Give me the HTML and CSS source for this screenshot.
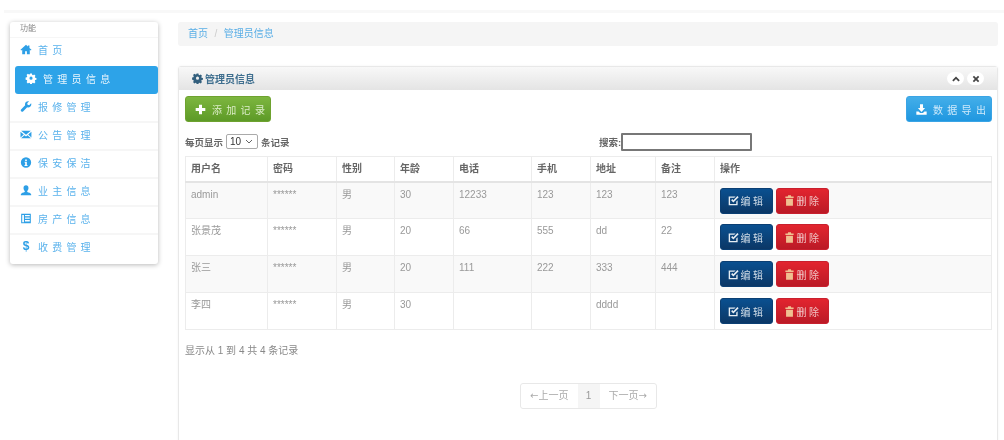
FILE: index.html
```html
<!DOCTYPE html>
<html lang="zh">
<head>
<meta charset="utf-8">
<title>管理员信息</title>
<link rel="stylesheet" href="styles.css">
</head>
<body>
<svg class="defs" width="0" height="0" aria-hidden="true">
  <symbol id="i-home" viewBox="0 0 16 16"><path d="M8 1 0 8.500l1 1.100 1.500-1.300V15h4.200v-4.300h2.600V15h4.200V8.300L15 9.600l1-1.100-3-2.800V2h-2.300v1.500z"/></symbol>
  <symbol id="i-cog" viewBox="0 0 16 16"><path fill-rule="evenodd" d="M6.600 1h2.800l.4 2 1.300.6 1.800-1.100 2 2-1.100 1.800.6 1.300 2 .4v2.800l-2 .4-.6 1.300 1.100 1.800-2 2-1.800-1.100-1.300.6-.4 2H6.600l-.4-2-1.300-.6-1.800 1.100-2-2 1.100-1.800-.6-1.300-2-.4V7l2-.4.6-1.300-1.100-1.800 2-2 1.800 1.100 1.300-.6zM8 5.800a2.400 2.400 0 1 0 0 4.800 2.400 2.400 0 0 0 0-4.800z" transform="translate(.5 -.2) scale(.94)"/></symbol>
  <symbol id="i-wrench" viewBox="0 0 16 16"><path d="M15.400 3.300 12.600 6l-2.300-.5-.5-2.300L12.500.5a4.500 4.500 0 0 0-5.700 5.700L.8 12.200a2 2 0 0 0 0 2.400l.5.500a2 2 0 0 0 2.400 0l6-6a4.500 4.500 0 0 0 5.700-5.800z"/></symbol>
  <symbol id="i-mail" viewBox="0 0 16 16"><path d="M1 2.500h14L8 8.500zM0 4v8.500l4.800-4.500zM15.900 4v8.500L11.200 8zM5.800 9 8 10.900 10.200 9l5 4.500H.8z"/></symbol>
  <symbol id="i-info" viewBox="0 0 16 16"><path fill-rule="evenodd" d="M8 .5a7.500 7.500 0 1 0 0 15 7.500 7.500 0 0 0 0-15zM6.800 3.500h2.400v2.200H6.800zM6 7h3.200v4.500H10.200V13H5.800v-1.500h1V8.500H6z"/></symbol>
  <symbol id="i-user" viewBox="0 0 16 16"><path d="M8 .5c2.300 0 3.600 1.700 3.600 3.900 0 2-.9 3.500-1.800 4.300v1.500c2 .7 5.200 1.500 5.700 3.300v1.500H.5V13.500c.5-1.800 3.700-2.600 5.700-3.300V8.700C5.300 7.900 4.400 6.400 4.400 4.400 4.400 2.200 5.700.5 8 .5z"/></symbol>
  <symbol id="i-list" viewBox="0 0 16 16"><path fill-rule="evenodd" d="M1 1h14v14H1zM2.500 2.800v10.700h2.500V2.800zM6.500 2.800v2h7v-2zM6.500 6.500v2h7v-2zM6.500 10.200v2h7v-2z"/></symbol>
  <symbol id="i-plus" viewBox="0 0 16 16"><path d="M5.800 1h4.400v4.800H15v4.400h-4.800V15H5.800v-4.800H1V5.800h4.800z"/></symbol>
  <symbol id="i-down" viewBox="0 0 16 16"><path d="M5.800.5h4.400v5.300h3L8 11.500 2.800 5.800h3zM.5 11h3.200l2.200 2h4.200l2.200-2h3.200v4.500H.5z"/></symbol>
  <symbol id="i-edit" viewBox="0 0 16 16"><path d="M12 9.500V13H3V4h6l2-2H1v13h13V7.500z"/><path d="M4.500 7.500 7.800 11 15.500 3.200 13.700 1.500 7.800 7.500 6.300 5.800z"/></symbol>
  <symbol id="i-trash" viewBox="0 0 16 16"><path d="M6 .5h4l.5 1.500H14v2.500H2V2h3.500zM3 5.500h10V15.500H3z"/></symbol>
  <symbol id="i-up" viewBox="0 0 16 16"><path d="M8 3 15.500 10.500 13 13 8 8 3 13 .5 10.500z"/></symbol>
  <symbol id="i-x" viewBox="0 0 16 16"><path d="M4 1.500 8 5.500l4-4L14.500 4l-4 4 4 4-2.500 2.500-4-4-4 4L1.500 12l4-4-4-4z"/></symbol>
</svg>
<div class="page">
  <aside class="sidebar">
    <div class="side-title">功能</div>
    <ul class="nav">
      <li class="nav-first"><a><svg class="nav-ico"><use href="#i-home"/></svg>首页</a></li>
      <li class="active"><a><svg class="nav-ico"><use href="#i-cog"/></svg>管理员信息</a></li>
      <li><a><svg class="nav-ico"><use href="#i-wrench"/></svg>报修管理</a></li>
      <li><a><svg class="nav-ico"><use href="#i-mail"/></svg>公告管理</a></li>
      <li><a><svg class="nav-ico"><use href="#i-info"/></svg>保安保洁</a></li>
      <li><a><svg class="nav-ico"><use href="#i-user"/></svg>业主信息</a></li>
      <li><a><svg class="nav-ico"><use href="#i-list"/></svg>房产信息</a></li>
      <li><a><span class="nav-ico dollar">$</span>收费管理</a></li>
    </ul>
  </aside>
  <main class="content">
    <nav class="crumb"><a>首页</a><span class="sep">/</span><a>管理员信息</a></nav>
    <section class="panel">
      <header class="panel-head">
        <h2><svg class="head-ico"><use href="#i-cog"/></svg>管理员信息</h2>
        <div class="head-tools">
          <span class="tool"><svg><use href="#i-up"/></svg></span>
          <span class="tool"><svg><use href="#i-x"/></svg></span>
        </div>
      </header>
      <div class="panel-body">
        <div class="actions">
          <button class="btn btn-green"><svg><use href="#i-plus"/></svg>添加记录</button>
          <button class="btn btn-blue"><svg><use href="#i-down"/></svg>数据导出</button>
        </div>
        <div class="filters">
          <label class="len">每页显示 <select class="len-select"><option>10</option></select> 条记录</label>
          <label class="search">搜索:<input class="search-input" type="text"></label>
        </div>
        <table class="grid">
          <colgroup>
            <col class="c1"><col class="c2"><col class="c3"><col class="c4"><col class="c5"><col class="c6"><col class="c7"><col class="c8"><col>
          </colgroup>
          <thead>
            <tr><th>用户名</th><th>密码</th><th>性别</th><th>年龄</th><th>电话</th><th>手机</th><th>地址</th><th>备注</th><th>操作</th></tr>
          </thead>
          <tbody>
            <tr><td>admin</td><td>******</td><td>男</td><td>30</td><td>12233</td><td>123</td><td>123</td><td>123</td><td class="ops"><button class="mini mini-edit"><svg><use href="#i-edit"/></svg>编辑</button><button class="mini mini-del"><svg><use href="#i-trash"/></svg>删除</button></td></tr>
            <tr><td>张景茂</td><td>******</td><td>男</td><td>20</td><td>66</td><td>555</td><td>dd</td><td>22</td><td class="ops"><button class="mini mini-edit"><svg><use href="#i-edit"/></svg>编辑</button><button class="mini mini-del"><svg><use href="#i-trash"/></svg>删除</button></td></tr>
            <tr><td>张三</td><td>******</td><td>男</td><td>20</td><td>111</td><td>222</td><td>333</td><td>444</td><td class="ops"><button class="mini mini-edit"><svg><use href="#i-edit"/></svg>编辑</button><button class="mini mini-del"><svg><use href="#i-trash"/></svg>删除</button></td></tr>
            <tr><td>李四</td><td>******</td><td>男</td><td>30</td><td></td><td></td><td>dddd</td><td></td><td class="ops"><button class="mini mini-edit"><svg><use href="#i-edit"/></svg>编辑</button><button class="mini mini-del"><svg><use href="#i-trash"/></svg>删除</button></td></tr>
          </tbody>
        </table>
        <p class="info">显示从 1 到 4 共 4 条记录</p>
        <div class="pager-wrap">
          <div class="pager"><a><span class="arrow">←</span>上一页</a><a class="cur">1</a><a>下一页<span class="arrow">→</span></a></div>
        </div>
      </div>
    </section>
  </main>
</div>
</body>
</html>
```
FILE: styles.css
```css
* { box-sizing: border-box; }
html, body { margin: 0; height: 100%; overflow: hidden; background: #fff; }
body { font-family: "Liberation Sans", "Noto Sans CJK SC", sans-serif; font-size: 10px; color: #777; }
.defs { position: absolute; }
svg { fill: currentColor; }
.page { display: flex; align-items: flex-start; gap: 20px; height: 440px; padding: 10px 6px 0 10px; filter: blur(.6px); background: linear-gradient(#f8f8f8, #f8f8f8) no-repeat 4px 10px / 100% 3px; }

.sidebar { width: 148px; margin-top: 12px; flex: none; background: #fff; border-radius: 3px; box-shadow: 0 1px 5px rgba(0,0,0,.28); height: 242px; }
.side-title { height: 15px; padding: 2px 0 0 10px; font-size: 8px; line-height: 10px; color: #888; }
.nav { list-style: none; margin: 0; padding: 0; }
.nav li { height: 28px; border-top: 2px solid #f6f6f6; }
.nav .nav-first { height: 28px; border-top: 1px solid #f6f6f6; padding-bottom: 4px; }
.nav a { display: flex; align-items: center; height: 100%; padding: 0 0 3px 10px; font-size: 10px; letter-spacing: 4.200px; color: #5ab2ec; }
.nav-first a { padding-bottom: 0; }
.nav-ico { width: 12px; height: 11px; margin-right: 6px; flex: none; color: #2d9fe6; }
.dollar { display: block; font-weight: 700; font-size: 12px; line-height: 11px; text-align: center; letter-spacing: 0; }
.nav .active { margin-left: 5px; height: 28px; margin-top: 1px; border: 0; background: #2da3e8; border-radius: 3px; }
.nav .active a { padding-bottom: 3px; padding-left: 10px; color: #e8f5fd; letter-spacing: 4.300px; }
.nav .active .nav-ico { color: #fff; }
.nav .active + li { height: 27px; border-top: 0; }

.content { flex: 1; min-width: 0; margin-top: 12px; }
.crumb { height: 24px; margin-bottom: 20px; padding-left: 10px; background: #f5f5f5; border-radius: 3px; font-size: 10px; line-height: 23px; color: #5aaee6; }
.sep { margin: 0 6.500px; color: #ccc; }

.panel { border: 1px solid #e8e8e8; border-radius: 3px 3px 0 0; height: 380px; box-shadow: 0 0 3px rgba(0,0,0,.05); }
.panel-head { display: flex; justify-content: space-between; align-items: center; height: 23px; padding: 0 13px 0 13px; background: linear-gradient(#f8f8f8, #e4e4e4); }
.panel-head h2 { margin: 0; display: flex; align-items: center; font-size: 10px; font-weight: 700; color: #3f6f8f; }
.head-ico { width: 11px; height: 11px; margin-right: 2px; color: #335f7d; }
.head-tools { display: flex; gap: 3px; }
.tool { display: flex; align-items: center; justify-content: center; width: 17px; height: 13px; background: #fff; border-radius: 7px; color: #444; }
.tool svg { width: 8px; height: 8px; }

.panel-body { padding: 6px 5px 0 6px; }
.actions { display: flex; justify-content: space-between; }
.btn { display: flex; align-items: center; height: 26px; margin: 0; padding: 0 0 0 9px; border-radius: 3px; font-family: inherit; font-size: 10px; letter-spacing: 4.300px; white-space: nowrap; color: #dcedc8; }
.btn svg { width: 11px; height: 11px; margin-right: 6px; color: #fff; flex: none; }
.btn-green { width: 86px; border: 1px solid #6ea22f; background: linear-gradient(#7db63f, #5d9a27); }
.btn-blue { width: 86px; border: 1px solid #3aa4e5; background: linear-gradient(#43aee9, #1f97e0); color: #cfeafb; }

.filters { display: flex; align-items: center; height: 23px; margin-top: 8px; margin-bottom: 3px; font-size: 9.500px; font-weight: 700; color: #666; }
.len { width: 414px; display: flex; align-items: center; gap: 2px; }
.len-select { appearance: none; -webkit-appearance: none; width: 32px; height: 15px; margin: 0 1px; padding: 0 0 0 3px; font-family: inherit; font-size: 10px; font-weight: 400; color: #333; background: #fff url("data:image/svg+xml,%3Csvg xmlns='http://www.w3.org/2000/svg' width='8' height='5'%3E%3Cpath d='M1 1l3 3 3-3' fill='none' stroke='%23666'/%3E%3C/svg%3E") no-repeat right 4px center; border: 1px solid #aaa; border-radius: 2px; }
.search { display: flex; align-items: center; }
.search-input { width: 131px; height: 18px; margin: 0; padding: 0; background: #fff; border: 2px solid #777; border-radius: 1px; }

.grid { width: 807px; table-layout: fixed; border-collapse: collapse; border: 1px solid #e8e8e8; font-size: 10px; }
.c1 { width: 82px; } .c2 { width: 69px; } .c3 { width: 58px; } .c4 { width: 59px; }
.c5 { width: 78px; } .c6 { width: 59px; } .c7 { width: 65px; } .c8 { width: 59px; }
.grid th, .grid td { border: 1px solid #ececec; padding: 0 0 0 5px; text-align: left; vertical-align: top; }
.grid th { height: 25px; padding-top: 3px; font-size: 10px; font-weight: 700; color: #666; border-bottom: 2px solid #e4e4e4; }
.grid td { height: 37px; padding-top: 6px; line-height: 12px; color: #999; }
.grid tbody tr:nth-child(odd) { background: #f9f9f9; }
.grid .ops { padding-top: 5px; white-space: nowrap; }

.mini { display: inline-flex; align-items: center; justify-content: center; height: 26px; margin: 0 3px 0 0; padding: 0; border-radius: 3px; font-family: inherit; font-size: 10px; letter-spacing: 2.500px; color: #cfdbe6; vertical-align: top; }
.mini svg { width: 11px; height: 11px; margin-right: 2px; flex: none; }
.mini-edit { width: 53px; border: 1px solid #0b3f73; background: linear-gradient(#0a5090, #0b3766); }
.mini-edit svg { color: #e6edf3; }
.mini-del { width: 53px; border: 1px solid #c8202e; background: linear-gradient(#e2252f, #bb1a26); color: #f0c4c4; }
.mini-del svg { color: #f0c090; }

.info { margin: 15px 0 0; font-size: 10px; line-height: 12px; color: #888; }
.pager-wrap { display: flex; justify-content: center; margin-top: 26px; }
.pager { display: flex; width: 137px; height: 26px; border: 1px solid #e8e8e8; border-radius: 3px; font-size: 10px; line-height: 24px; white-space: nowrap; color: #aaa; }
.pager a { flex: 1; text-align: center; }
.pager .cur { flex: none; width: 22px; background: #f5f5f5; color: #999; }
.arrow { font-family: "DejaVu Sans", sans-serif; }
```
